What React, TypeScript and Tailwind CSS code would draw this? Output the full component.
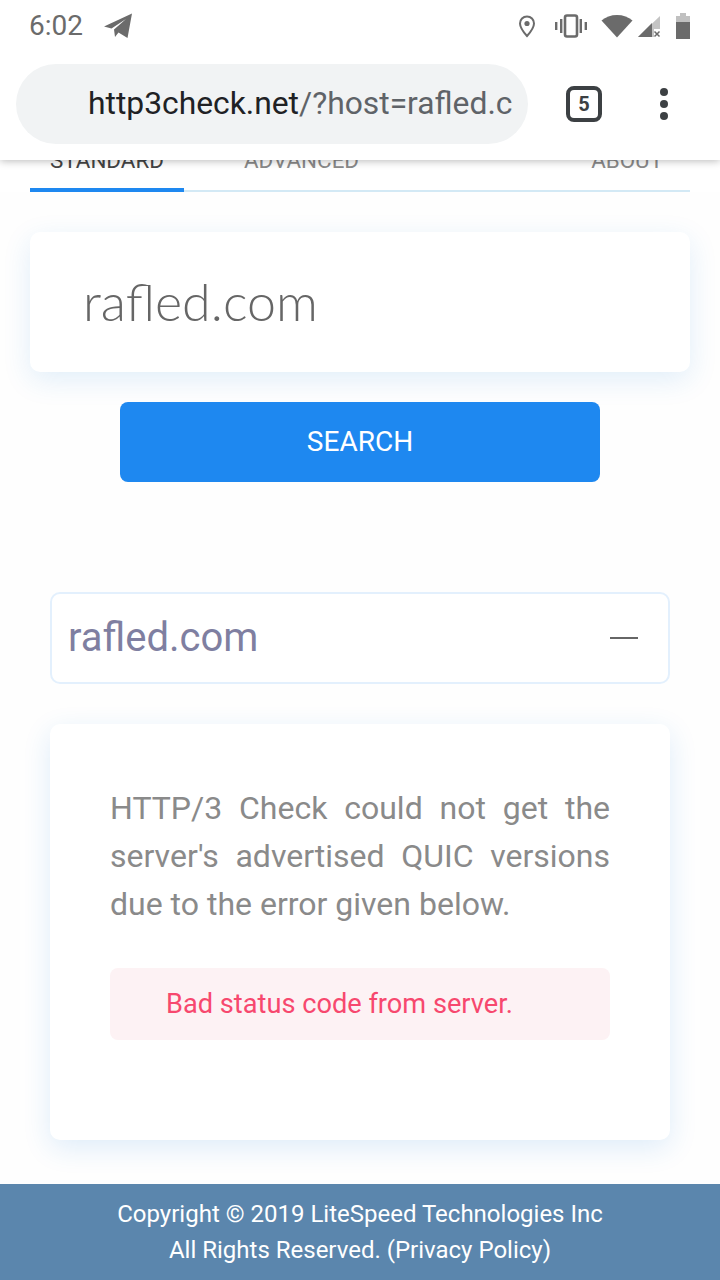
const StatusIcons = () => (
  <div className="flex items-center text-[#6b6b6b]">
    {/* location */}
    <svg width="18" height="24" viewBox="0 0 18 24" className="mr-[18px]">
      <path d="M9 2.500C5 2.500 2 5.500 2 9.400c0 4.600 7 12.600 7 12.600s7-8 7-12.600C16 5.500 13 2.500 9 2.500z" fill="none" stroke="currentColor" strokeWidth="2" />
      <circle cx="9" cy="9.500" r="2.600" fill="currentColor" />
    </svg>
    {/* vibrate */}
    <svg width="34" height="24" viewBox="0 0 34 24" className="mr-[13px]">
      <rect x="11" y="1.500" width="12" height="21" rx="2" fill="none" stroke="currentColor" strokeWidth="2.600" />
      <rect x="6" y="5" width="2.400" height="14" fill="currentColor" />
      <rect x="25.600" y="5" width="2.400" height="14" fill="currentColor" />
      <rect x="1" y="8" width="2.400" height="8" fill="currentColor" />
      <rect x="30.600" y="8" width="2.400" height="8" fill="currentColor" />
    </svg>
    {/* wifi */}
    <svg width="32" height="24" viewBox="0 0 32 24" className="mr-[5px]">
      <path d="M0.500 6.500C4.500 3 10 1 16 1s11.500 2 15.500 5.500L16 23.500z" fill="currentColor" />
    </svg>
    {/* signal, no sim */}
    <svg width="24" height="24" viewBox="0 0 24 24" className="mr-[14px]">
      <path d="M22 2v13h-6v8H0z" fill="#c4c4c4" />
      <path d="M0 23L14 9v14z" fill="currentColor" />
      <path d="M16.500 17.500l5 5m0-5l-5 5" stroke="currentColor" strokeWidth="1.500" fill="none" />
    </svg>
    {/* battery */}
    <svg width="14" height="26" viewBox="0 0 14 26">
      <path d="M4 0h6v3h4v6H0V3h4z" fill="#c0c0c0" />
      <rect x="0" y="9" width="14" height="17" fill="currentColor" />
    </svg>
  </div>
);

const BrowserChrome = () => (
  <header className="relative z-10 h-[160px] bg-white shadow-[0_1px_8px_rgba(0,0,0,0.28)]">
    <div className="flex h-[50px] items-center justify-between pl-[29px] pr-[30px] pt-[2px]">
      <div className="flex items-center gap-[20px]">
        <span className="text-[28px] leading-none text-[#6b6b6b]">6:02</span>
        <svg width="30" height="26" viewBox="0 0 30 26" className="text-[#6b6b6b]">
          <path d="M1 13.500L29 0.500 24.500 25 15.500 19.500 12 24 11 16.500 23 6 8.500 15.500z" fill="currentColor" />
        </svg>
      </div>
      <StatusIcons />
    </div>
    <div className="mt-[14px] flex items-center">
      <div className="ml-[16px] flex h-[80px] w-[512px] items-center overflow-hidden whitespace-nowrap rounded-[40px] bg-[#f1f3f4] pl-[72px] text-[31.800px] leading-none">
        <span className="text-[#202124]">http3check.net</span>
        <span className="text-[#5f6368]">/?host=rafled.c</span>
      </div>
      <div className="ml-[38px] flex h-[36px] w-[36px] items-center justify-center rounded-[8px] border-[4px] border-[#3c4043] text-[20px] font-bold text-[#3c4043]">
        5
      </div>
      <div className="ml-[58px] flex flex-col gap-[4px]">
        <span className="h-[8px] w-[8px] rounded-full bg-[#3c4043]" />
        <span className="h-[8px] w-[8px] rounded-full bg-[#3c4043]" />
        <span className="h-[8px] w-[8px] rounded-full bg-[#3c4043]" />
      </div>
    </div>
  </header>
);

const Tabs = () => (
  <div className="relative mx-[30px] -mt-[11px] flex h-[43px] border-b-[2px] border-[#d3e9f5] text-[22.400px] leading-[22px] text-[#8a8a8a]">
    <div className="-mb-[2px] h-[43px] w-[154px] border-b-[4px] border-[#1e88f0] pl-[20px] text-[#444444]">STANDARD</div>
    <div className="ml-[60px]">ADVANCED</div>
    <div className="ml-auto mr-[27px]">ABOUT</div>
  </div>
);

export default function App() {
  return (
    <div className="flex h-[1280px] w-[720px] flex-col overflow-hidden bg-white font-['Roboto',sans-serif]">
      <BrowserChrome />
      <Tabs />

      <main className="flex flex-1 flex-col bg-[#fefefe]">
        <div className="mx-[30px] mt-[40px] flex h-[140px] items-center rounded-[10px] bg-white pb-[3px] pl-[53px] font-['Lato',sans-serif] text-[52px] font-light text-[#666666] shadow-[0_8px_28px_rgba(30,130,220,0.13)]">
          rafled.com
        </div>

        <button type="button" className="mx-auto mt-[30px] h-[80px] w-[480px] rounded-[8px] bg-[#1e88f0] text-[28px] text-white">
          SEARCH
        </button>

        <div className="mx-[50px] mt-[110px] flex h-[92px] items-center justify-between rounded-[10px] border-[2px] border-[#e3f0fd] bg-white pl-[16px] pr-[30px]">
          <span className="text-[40px] text-[#7f7fa1]">rafled.com</span>
          <span className="h-[2px] w-[28px] bg-[#666666]" />
        </div>

        <section className="mx-[50px] mt-[40px] h-[416px] rounded-[10px] bg-white px-[60px] pt-[60px] shadow-[0_8px_28px_rgba(30,130,220,0.14)]">
          <p className="text-justify text-[32px] leading-[48px] text-[#8a8a8a]">
            HTTP/3 Check could not get the server's advertised QUIC versions due to the error given below.
          </p>
          <div className="mt-[40px] flex h-[72px] items-center rounded-[8px] bg-[#fdf2f4] pl-[56px] text-[27.200px] text-[#f7486e]">
            Bad status code from server.
          </div>
        </section>
      </main>

      <footer className="flex h-[96px] flex-col items-center justify-center bg-[#5b86ad] text-[24px] leading-[36px] text-white">
        <span>Copyright © 2019 LiteSpeed Technologies Inc</span>
        <span>All Rights Reserved. (Privacy Policy)</span>
      </footer>
    </div>
  );
}
